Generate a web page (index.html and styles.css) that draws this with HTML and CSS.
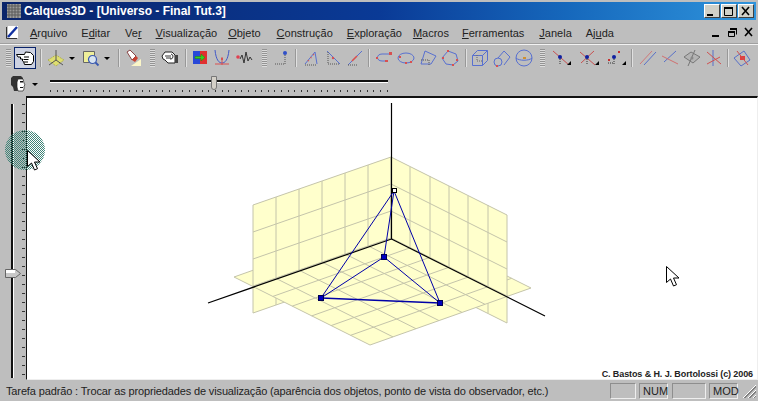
FILE: index.html
```html
<!DOCTYPE html>
<html lang="pt">
  <head>
    <meta charset="UTF-8" />
    <title>Calques3D</title>
    <link rel="stylesheet" href="styles.css">
  </head>
  <body>
    <div class="window">
      <!-- Title bar -->
      <div class="titlebar">
        <svg class="title-icon" width="14" height="14" viewBox="0 0 14 14"><path fill="#9a9a9a" d="M0 0h14v14H0z"/><path stroke="#5a5a5a" d="M2 0v14M5 0v14M8 0v14M11 0v14M0 2h14M0 5h14M0 8h14M0 11h14"/></svg>
        <span class="title-text">Calques3D - [Universo - Final Tut.3]</span>
        <div class="win-buttons">
          <span class="win-btn"><svg width="15" height="14" viewBox="0 0 15 14"><path d="M3 10h6v2H3z"/></svg></span>
          <span class="win-btn"><svg width="15" height="14" viewBox="0 0 15 14"><path fill="none" stroke="#000" d="M3.5 3.5h8v8h-8z"/><path d="M3 3h9v2H3z"/></svg></span>
          <span class="win-btn"><svg width="15" height="14" viewBox="0 0 15 14"><path stroke="#000" stroke-width="1.6" d="M4 3l7 8M11 3l-7 8"/></svg></span>
        </div>
      </div>

      <!-- Menu -->
      <div class="menubar">
        <svg class="doc-icon" width="14" height="14" viewBox="0 0 14 14"><path fill="#fff" d="M3 1h10v12H3z"/><path fill="none" stroke="#333" d="M1.5 2v11.5H12"/><path fill="none" stroke="#1030a0" stroke-width="2.4" d="M3 12L12 2"/></svg>
        <nav class="menu">
          <span class="m-arquivo"><u>A</u>rquivo</span>
          <span class="m-editar">E<u>d</u>itar</span>
          <span class="m-ver">Ve<u>r</u></span>
          <span class="m-vis"><u>V</u>isualização</span>
          <span class="m-obj"><u>O</u>bjeto</span>
          <span class="m-con"><u>C</u>onstrução</span>
          <span class="m-exp"><u>E</u>xploração</span>
          <span class="m-mac"><u>M</u>acros</span>
          <span class="m-fer"><u>F</u>erramentas</span>
          <span class="m-jan"><u>J</u>anela</span>
          <span class="m-aju">Aj<u>u</u>da</span>
        </nav>
        <div class="mdi-buttons">
          <svg width="16" height="12" viewBox="0 0 16 12"><path d="M3 9h7v2H3z"/></svg>
          <svg width="16" height="12" viewBox="0 0 16 12"><path fill="none" stroke="#000" d="M5.5 3.5h6v5M3.5 5.5h6v5h-6z"/><path d="M5 2h7v2H5zM3 5h7v2H3z"/></svg>
          <svg width="16" height="12" viewBox="0 0 16 12"><path stroke="#000" stroke-width="1.6" d="M4 2l7 8M11 2l-7 8"/></svg>
        </div>
      </div>

      <!-- Main toolbar -->
      <div class="toolbar">
        <span class="grip"></span>
        <span class="tb-btn selected"><svg width="18" height="16" viewBox="0 0 18 16"><path fill="#fff" stroke="#000" d="M.5 4.5h8l1-2.500 5 .5 3 3v6l-2 3H8.500l-1-3-1-.5v-2h-2v-2H2z"/><path fill="none" stroke="#000" d="M8 7h5M7.500 9.500h5M8 12h4"/></svg></span>
        <span class="sep s-a"></span>
        <span class="tb-btn"><svg width="18" height="18" viewBox="0 0 18 18"><path fill="#dede70" d="M1 11l8-5 8 5-8 6z"/><path fill="none" stroke="#a8a840" stroke-dasharray="1 1" d="M1 11l8-5 8 5-8 6z"/><path fill="none" stroke="#555" d="M9 1v10M9 11l-7 5M9 11l7 5"/></svg></span>
        <span class="drop"></span>
        <span class="tb-btn m3"><svg width="18" height="18" viewBox="0 0 18 18"><path fill="#efef9a" stroke="#666" d="M1.5 2.5h11v11h-11z"/><circle cx="10.5" cy="10.5" r="4" fill="#d8e4f0" stroke="#3858b0" stroke-width="1.2"/><path stroke="#3858b0" stroke-width="1.8" d="M13.5 13.5l3 3"/></svg></span>
        <span class="drop"></span>
        <span class="sep s-b"></span>
        <span class="tb-btn"><svg width="18" height="18" viewBox="0 0 18 18"><path fill="#fbf6c8" d="M6 17l10-7v7z"/><path fill="#fff" stroke="#844" d="M2 3l3-2 6 6-4 4z"/><path fill="#c84030" d="M7 11l4-4 2 2-3 4z"/></svg></span>
        <span class="grip g-b"></span>
        <span class="tb-btn"><svg width="18" height="16" viewBox="0 0 18 16"><path fill="#fff" stroke="#222" d="M1 6l3-4h7l3 3v8H7L4 10 2 9z"/><path fill="none" stroke="#333" d="M4 6h6M5 8h5M10 4a2 2 0 0 1-1 5"/><path fill="#444" d="M14 5h3v8h-3z"/></svg></span>
        <span class="sep s-c"></span>
        <span class="tb-btn"><svg width="18" height="18" viewBox="0 0 18 18"><path fill="#2848d8" d="M2 2h7v13H2z"/><path fill="#e03030" d="M9 2h7v13H9z"/><path fill="#30d020" stroke="#280" stroke-width=".5" d="M4 7.5h6V5l4 3.5-4 3.500V9.500H4z"/></svg></span>
        <span class="tb-btn"><svg width="18" height="18" viewBox="0 0 18 18"><path fill="none" stroke="#4058c8" d="M2 1c1 10 4 13 7 13s6-3 7-13"/><path fill="none" stroke="#d85050" d="M2 15h14M9 8v8"/><path fill="#d85050" d="M8 9h2v2H8z"/></svg></span>
        <span class="tb-btn"><svg width="18" height="16" viewBox="0 0 18 16"><path fill="none" stroke="#333" d="M5 9l2-4 2 8 2-11 2 9 2-4 2 3"/><circle cx="3" cy="7" r="1.8" fill="#e04050"/></svg></span>
        <span class="grip g-c"></span>
        <span class="tb-btn"><svg width="18" height="18" viewBox="0 0 18 18"><circle cx="13" cy="4" r="2" fill="#3050c8"/><path fill="none" stroke="#555" stroke-dasharray="1 1" d="M13 6v9H2"/></svg></span>
        <span class="sep s-d"></span>
        <span class="tb-btn"><svg width="18" height="18" viewBox="0 0 18 18"><path fill="none" stroke="#5870d0" d="M3 15L13 3l2 12"/><path stroke="#d85050" stroke-width="1.6" stroke-dasharray="1 3" d="M6 12l6-7"/><path stroke="#555" stroke-dasharray="1 1" d="M3 16h12"/></svg></span>
        <span class="tb-btn"><svg width="18" height="18" viewBox="0 0 18 18"><path fill="none" stroke="#5870d0" d="M3 2l13 13"/><path fill="none" stroke="#555" stroke-dasharray="1 1" d="M4 3v12h12"/><circle cx="9" cy="9" r="1.2" fill="#d85050"/></svg></span>
        <span class="tb-btn"><svg width="18" height="18" viewBox="0 0 18 18"><path stroke="#5870d0" d="M2 16L16 2"/><path stroke="#d85050" stroke-width="1.6" d="M6 12l5-5"/><path stroke="#555" stroke-dasharray="1 1" d="M2 16h10"/></svg></span>
        <span class="sep s-e"></span>
        <span class="tb-btn"><svg width="18" height="18" viewBox="0 0 18 18"><path fill="none" stroke="#5870d0" d="M16 5H7C1 5 1 12 7 12h5"/><path fill="#d85050" d="M14 3h3v3h-3zM1 8h2v2H1zM10 11h3v2h-3z"/></svg></span>
        <span class="tb-btn"><svg width="18" height="18" viewBox="0 0 18 18"><ellipse cx="9" cy="9" rx="8" ry="5" fill="none" stroke="#5870d0"/><path fill="#d85050" d="M2 7h2v2H2zM13 12h2v2h-2zM8 13h2v2H8z"/></svg></span>
        <span class="tb-btn"><svg width="18" height="18" viewBox="0 0 18 18"><path fill="none" stroke="#5870d0" d="M6 2l11 5-5 8H2z"/><path fill="none" stroke="#555" stroke-dasharray="1 1" d="M2 11h8v5"/></svg></span>
        <span class="tb-btn"><svg width="18" height="18" viewBox="0 0 18 18"><path fill="none" stroke="#5870d0" d="M7 2l8 3 2 7-5 4-7-1-4-6z"/><path fill="#d85050" d="M6 1h2v2H6zM1 8h2v2H1zM11 15h2v2h-2zM15 10h2v2h-2z"/></svg></span>
        <span class="sep s-f"></span>
        <span class="tb-btn"><svg width="18" height="18" viewBox="0 0 18 18"><path fill="none" stroke="#5870d0" d="M1.5 6.5h10v10h-10zM1.5 6.5l5-5h10v10l-5 5M11.5 6.5l5-5"/><path fill="none" stroke="#666" stroke-dasharray="1 1" d="M6 6v6h5"/></svg></span>
        <span class="tb-btn"><svg width="18" height="18" viewBox="0 0 18 18"><path fill="none" stroke="#5870d0" d="M5 9L11 2l6 6-6 8"/><circle cx="5" cy="13" r="4" fill="none" stroke="#5870d0"/><path fill="#d85050" d="M3 16h2v2H3z"/></svg></span>
        <span class="tb-btn"><svg width="18" height="18" viewBox="0 0 18 18"><circle cx="9" cy="9" r="8" fill="none" stroke="#5870d0"/><path fill="none" stroke="#5870d0" d="M1 9c3 3 13 3 16 0"/><path fill="#d09030" d="M8 8h3v2H8z"/></svg></span>
        <span class="grip g-d"></span>
        <span class="tb-btn wide"><svg width="22" height="18" viewBox="0 0 22 18"><path stroke="#c85050" d="M2 2l16 14"/><circle cx="9" cy="8" r="2" fill="#1020a0"/><path stroke="#333" stroke-dasharray="1 1" d="M9 10v6"/><path d="M16 16l4-4v4z"/></svg></span>
        <span class="tb-btn wide m3"><svg width="22" height="18" viewBox="0 0 22 18"><path stroke="#c85050" d="M2 3l15 13M16 2L3 14"/><circle cx="9" cy="8" r="2" fill="#1020a0"/><path stroke="#333" stroke-dasharray="1 1" d="M9 10v6"/><path d="M17 16l4-4v4z"/></svg></span>
        <span class="tb-btn wide m3"><svg width="22" height="18" viewBox="0 0 22 18"><circle cx="9" cy="8" r="2" fill="#1020a0"/><path fill="#c83030" d="M13 2h2v2h-2zM3 10h2v2H3z"/><path fill="none" stroke="#333" stroke-dasharray="1 1" d="M9 10v6M3 14h6"/><path d="M17 16l4-4v4z"/></svg></span>
        <span class="sep s-g"></span>
        <span class="tb-btn"><svg width="18" height="18" viewBox="0 0 18 18"><path stroke="#d07878" d="M1 15L13 2"/><path stroke="#5870c8" d="M5 16L17 3"/></svg></span>
        <span class="tb-btn"><svg width="18" height="18" viewBox="0 0 18 18"><path stroke="#5870c8" d="M3 13L15 2"/><path stroke="#d07070" d="M1 7l16 8"/></svg></span>
        <span class="tb-btn"><svg width="18" height="18" viewBox="0 0 18 18"><path fill="#b4b4b4" stroke="#777" d="M1 8l7-5 9 5-7 6z"/><path stroke="#777" d="M12 1L5 17"/><circle cx="9" cy="9" r="1.5" fill="#888"/></svg></span>
        <span class="tb-btn"><svg width="18" height="18" viewBox="0 0 18 18"><path stroke="#5870c8" d="M8 1v16"/><path stroke="#d05050" d="M2 3l14 12M2 15L15 8"/></svg></span>
        <span class="sep s-h"></span>
        <span class="tb-btn"><svg width="18" height="18" viewBox="0 0 18 18"><path fill="none" stroke="#5870c8" d="M1 9l10-7 6 9-9 6z"/><path fill="#e04040" d="M7 7h5v4H7z"/><path stroke="#d05050" d="M4 2l11 14"/></svg></span>
      </div>

      <!-- Horizontal slider -->
      <div class="slider-row">
        <svg class="face-icon" width="16" height="16" viewBox="0 0 16 16"><path fill="#333" d="M3 0h8l2 2v3H9v3H7v3l1 4H4L3 11 1 9V2z"/><path fill="#fff" stroke="#222" stroke-width=".7" d="M8 3h5l1 4 1 2-1 1v3l-1 2H8l-1-4V6z"/><path fill="#111" d="M10 5h3v1.5h-3zM10 11h3v1h-3z"/></svg>
        <span class="drop"></span>
        <div class="h-slider">
          <div class="h-track"></div>
          <div class="h-thumb"></div>
          <div class="h-ticks"></div>
        </div>
      </div>

      <div class="workspace">
        <!-- Vertical slider -->
        <div class="v-slider">
          <div class="v-track"></div>
          <div class="v-ticks"></div>
          <svg class="v-thumb" width="16" height="9" viewBox="0 0 16 9"><path fill="#c8c8c8" stroke="#666" d="M.5.5h10l5 4-5 4H.5z"/><path fill="#fff" d="M1 1h9v3H1z"/></svg>
        </div>

        <!-- 3D view -->
        <div class="canvas">
          <svg class="scene" width="730" height="283" viewBox="27 97 730 283">
            <g class="wall">
              <path d="M253 286L391 238V265L253 313Z"/>
              <path d="M391 238L507 296V323L391 265Z"/>
            </g>
            <g class="grid">
              <path d="M276 278v27M299 270v27M322 262v27M345 254v27M368 246v27"/>
              <path d="M410 248v27M430 257v27M449 267v27M468 277v27M488 286v27"/>
            </g>
            <path class="floor" d="M234 277L370 345L531 288L395 220Z"/>
            <path class="grid" d="M253.4 286.7L414.4 229.7M272.9 296.4L433.9 239.4M292.3 306.1L453.3 249.1M311.7 315.9L472.7 258.9M331.1 325.6L492.1 268.6M350.6 335.3L511.6 278.3"/>
            <path class="grid" d="M257 268.9L393 336.9M280 260.7L416 328.7M303 252.6L439 320.6M326 244.4L462 312.4M349 236.3L485 304.3M372 228.1L508 296.1"/>
            <g class="wall">
              <path d="M253 205L391 157V238L253 286Z"/>
              <path d="M391 157L507 215V296L391 238Z"/>
            </g>
            <path class="grid" d="M276 197v81M299 189v81M322 181v81M345 173v81M368 165v81"/>
            <path class="grid" d="M410 167v81M430 176v81M449 186v81M468 196v81M488 205v81"/>
            <path class="grid" d="M253 232L391 184M253 259L391 211M391 184L507 242M391 211L507 269"/>
            <path class="axis" d="M391.5 103V239M391.5 239L208 303M391.5 239L545 316"/>
            <path class="edge" d="M394 191L384 257M394 191L321 298M394 191L440 303M384 257L321 298M384 257L440 303"/>
            <path class="edge bold" d="M321 298L440 303"/>
            <rect class="pt" x="318.5" y="295.5" width="5" height="5"/>
            <rect class="pt" x="437.5" y="300.5" width="5" height="5"/>
            <rect class="pt" x="381.5" y="254.5" width="5" height="5"/>
            <rect class="pt open" x="392.5" y="188.5" width="4" height="4"/>
          </svg>
          <div class="credit">C. Bastos &amp; H. J. Bortolossi (c) 2006</div>
        </div>
      </div>

      <!-- Status bar -->
      <div class="statusbar">
        <span class="status-text">Tarefa padrão : Trocar as propriedades de visualização (aparência dos objetos, ponto de vista do observador, etc.)</span>
        <span class="pane p-blank1"></span>
        <span class="pane p-num">NUM</span>
        <span class="pane p-blank2"></span>
        <span class="pane p-mod">MOD</span>
        <svg class="resize" width="14" height="14" viewBox="0 0 14 14"><path stroke="#fff" d="M1 14L14 1M6 14l8-8M11 14l3-3"/><path stroke="#808080" d="M2 14L14 2M3 14L14 3M7 14l7-7M8 14l6-6M12 14l2-2"/></svg>
      </div>

      <!-- Overlays: dwell highlight and mouse pointers -->
      <div class="highlight"></div>
      <svg class="cursor c-left" width="14" height="21" viewBox="0 0 14 21"><path fill="#fff" stroke="#000" d="M.5.5v16l4-3.5 3 7 3-1.3-3-6.7h5.500z"/></svg>
      <svg class="cursor c-right" width="14" height="21" viewBox="0 0 14 21"><path fill="#fff" stroke="#000" d="M.5.5v16l4-3.5 3 7 3-1.3-3-6.7h5.500z"/></svg>
    </div>
  </body>
</html>
```

FILE: styles.css
```css
* {
  margin: 0;
  padding: 0;
  box-sizing: border-box;
}

body {
  font-family: "Liberation Sans", Arial, sans-serif;
  font-size: 11px;
  background-color: #c0c0c0;
  overflow: hidden;
}

svg {
  display: block;
  flex-shrink: 0;
}

.window {
  position: relative;
  width: 758px;
  height: 401px;
  padding-top: 2px;
  display: flex;
  flex-direction: column;
  background-color: #bebebe;
  color: #222;
  overflow: hidden;
}

/* Title bar */
.titlebar {
  height: 18px;
  margin: 0 2px;
  padding: 0 2px 0 5px;
  display: flex;
  align-items: center;
  background: linear-gradient(90deg, #0a246a 0%, #0a3a96 50%, #1668bc 75%, #2f94dc 100%);
  color: #fff;
}

.title-icon {
  margin-right: 3px;
}

.title-text {
  font-size: 12px;
  font-weight: 700;
  white-space: nowrap;
}

.win-buttons {
  margin-left: auto;
  display: flex;
  gap: 1px;
}

.win-btn {
  width: 16px;
  height: 14px;
  display: block;
  background-color: #d0d0c8;
  border: 1px solid;
  border-color: #fff #404040 #404040 #fff;
}

.win-btn svg {
  margin: -1px 0 0 -1px;
}

/* Menu */
.menubar {
  height: 24px;
  padding: 0 1px 0 5px;
  display: flex;
  align-items: center;
  border-bottom: 1px solid #a0a0a0;
  box-shadow: 0 1px 0 #f2f2f2;
}

.menu {
  display: flex;
  margin-left: 11px;
  padding-top: 2px;
  white-space: nowrap;
  font-size: 11px;
}

.m-editar { margin-left: 14px; }
.m-ver { margin-left: 15px; }
.m-vis { margin-left: 14px; }
.m-obj { margin-left: 11px; }
.m-con { margin-left: 16px; }
.m-exp { margin-left: 14px; }
.m-mac { margin-left: 11px; }
.m-fer { margin-left: 13px; }
.m-jan { margin-left: 15px; }
.m-aju { margin-left: 14px; }

.mdi-buttons {
  margin-left: auto;
  display: flex;
}

/* Toolbars */
.toolbar {
  height: 24px;
  margin-top: 2px;
  padding-left: 6px;
  display: flex;
  align-items: center;
}

.tb-btn {
  width: 22px;
  height: 22px;
  display: flex;
  align-items: center;
  justify-content: center;
}

.tb-btn.wide {
  width: 23px;
}

.tb-btn.selected {
  margin-left: 3px;
  background-color: #cdd2e2;
  border: 1px solid #0a246a;
}

.m3 {
  margin-left: 4px;
}

.grip {
  width: 5px;
  height: 18px;
  background: repeating-linear-gradient(180deg, #949494 0 1px, #dcdcdc 1px 2px);
}

.g-b { margin: 0 4px 0 5px; }
.g-c { margin: 0 3px 0 7px; }
.g-d { margin: 0 5px 0 5px; }

.sep {
  width: 2px;
  height: 18px;
  border-left: 1px solid #989898;
  border-right: 1px solid #e0e0e0;
}

.s-a { margin: 0 3px 0 4px; }
.s-b { margin: 0 3px 0 7px; }
.s-c { margin: 0 2px 0 4px; }
.s-d { margin: 0 3px 0 3px; }
.s-e { margin: 0 3px 0 2px; }
.s-f { margin: 0 2px 0 4px; }
.s-g { margin: 0 4px 0 4px; }
.s-h { margin: 0 2px 0 2px; }

.drop {
  width: 0;
  height: 0;
  margin: 0 1px 0 2px;
  border: 3px solid transparent;
  border-top-color: #000;
  border-bottom: 0;
}

.slider-row {
  height: 24px;
  margin-top: 2px;
  padding-left: 9px;
  display: flex;
  align-items: center;
}

.face-icon {
  margin: 0 4px 0 1px;
}

.h-slider {
  position: relative;
  width: 338px;
  height: 24px;
  margin-left: 11px;
}

.h-track {
  height: 3px;
  margin-top: 8px;
  background-color: #111;
  border-bottom: 1px solid #fff;
}

.h-ticks {
  height: 2px;
  margin-top: 7px;
  background: repeating-linear-gradient(90deg, #333 0 1px, transparent 1px 6.6px);
}

.h-thumb {
  position: absolute;
  left: 161px;
  top: 4px;
  width: 6px;
  height: 14px;
  background-color: #d4d0c8;
  border: 1px solid #777;
  border-radius: 0 0 3px 3px;
}

/* Workspace */
.workspace {
  flex: 1;
  min-height: 0;
  display: flex;
}

.v-slider {
  position: relative;
  width: 26px;
  padding: 8px 0 2px;
  display: flex;
}

.v-track {
  width: 3px;
  margin-left: 11px;
  background-color: #111;
  border-right: 1px solid #fff;
}

.v-ticks {
  width: 3px;
  margin-left: 8px;
  background: repeating-linear-gradient(180deg, #333 0 1px, transparent 1px 9px);
}

.v-thumb {
  position: absolute;
  left: 5px;
  top: 173px;
}

.canvas {
  flex: 1;
  position: relative;
  background-color: #fff;
  border-top: 2px solid #111;
  border-left: 1px solid #111;
  border-right: 1px solid #eee;
  border-bottom: 1px solid #eee;
}

.scene {
  margin-top: -1px;
}

.wall path,
.floor {
  fill: #ffffcc;
  stroke: #c4c4aa;
}

.grid {
  fill: none;
  stroke: #c4c4aa;
}

.axis {
  fill: none;
  stroke: #000;
  stroke-width: 1.2;
}

.edge {
  fill: none;
  stroke: #0000a8;
}

.edge.bold {
  stroke-width: 1.6;
}

.pt {
  fill: #0000c0;
  stroke: #000050;
}

.pt.open {
  fill: #fff;
  stroke: #000;
}

.credit {
  position: absolute;
  right: 4px;
  bottom: 0;
  font-size: 9px;
  font-weight: 700;
  letter-spacing: -.1px;
  color: #222;
}

/* Status bar */
.statusbar {
  height: 21px;
  padding: 2px 2px 2px 6px;
  display: flex;
  align-items: center;
  white-space: nowrap;
  font-size: 11px;
}

.status-text {
  flex: 1;
  letter-spacing: -.135px;
}

.pane {
  height: 16px;
  padding-left: 3px;
  line-height: 15px;
  border: 1px solid;
  border-color: #8e8e8e #eee #eee #8e8e8e;
}

.p-blank1 { width: 26px; margin-right: 3px; }
.p-num { width: 29px; margin-right: 4px; }
.p-blank2 { width: 34px; margin-right: 3px; }
.p-mod { width: 29px; margin-right: 4px; }

/* Overlays */
.highlight {
  position: absolute;
  left: 5px;
  top: 130px;
  width: 40px;
  height: 40px;
  border-radius: 50%;
  background-image: repeating-conic-gradient(#3f8478 0 25%, transparent 0 50%);
  background-size: 2px 2px;
}

.cursor {
  position: absolute;
}

.c-left {
  left: 27px;
  top: 150px;
}

.c-right {
  left: 666px;
  top: 266px;
}
```
